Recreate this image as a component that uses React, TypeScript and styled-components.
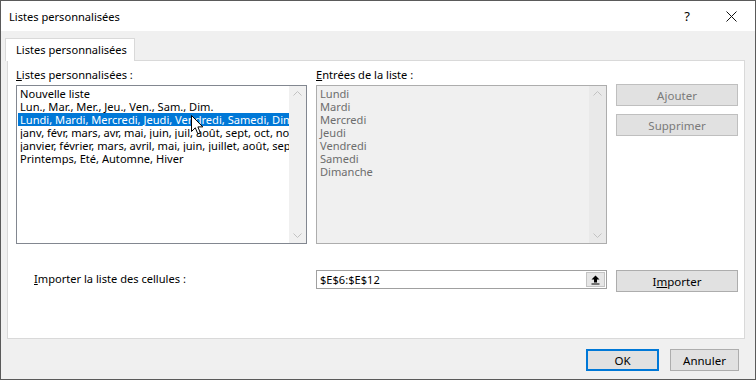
import styled, { createGlobalStyle } from "styled-components";

const GlobalStyle = createGlobalStyle`
  body {
    margin: 0;
    background: #f0f0f0;
    font-family: "Noto Sans", "Open Sans", sans-serif;
  }
`;

const Window = styled.div`
  width: 756px;
  height: 380px;
  box-sizing: border-box;
  border: 1px solid #5a5a5a;
  background: #f0f0f0;
  display: flex;
  flex-direction: column;
  font-size: 11.1px;
  color: #000;
  overflow: hidden;
`;

const TitleBar = styled.div`
  height: 30px;
  flex-shrink: 0;
  background: #fff;
  display: flex;
  align-items: center;
  padding: 0 2px 0 8px;
`;

const Title = styled.div`
  flex: 1;
  font-size: 11.1px;
`;

const CaptionButton = styled.div`
  width: 44px;
  height: 30px;
  display: flex;
  align-items: center;
  justify-content: center;
  font-size: 13px;
`;

const Body = styled.div`
  padding: 7px 4px 0 4px;
  display: flex;
  flex-direction: column;
`;

const TabStrip = styled.div`
  display: flex;
  height: 22px;
  position: relative;
  z-index: 1;
`;

const Tab = styled.div`
  width: 130px;
  height: 23px;
  box-sizing: border-box;
  border: 1px solid #d9d9d9;
  border-bottom: none;
  background: #fff;
  padding: 3px 0 0 10px;
  white-space: nowrap;
`;

const Pane = styled.div`
  margin-left: 2px;
  width: 738px;
  height: 279px;
  box-sizing: border-box;
  border: 1px solid #d9d9d9;
  background: #fff;
  padding: 6px 0 0 8px;
  display: grid;
  grid-template-columns: 291px 291px 122px;
  grid-template-rows: 18px 159px auto;
  column-gap: 9px;
`;

const Label = styled.div<{ $indent?: number }>`
  line-height: 16px;
  padding-left: ${(p) => p.$indent ?? 0}px;
  white-space: nowrap;
`;

const ListBox = styled.div<{ $disabled?: boolean }>`
  position: relative;
  box-sizing: border-box;
  height: 159px;
  border: 1px solid ${(p) => (p.$disabled ? "#adadad" : "#828790")};
  background: ${(p) => (p.$disabled ? "#f0f0f0" : "#fff")};
  display: flex;
  padding: 1px 0 0 1px;
`;

const Rows = styled.div`
  flex: 1;
  overflow: hidden;
`;

const Row = styled.div<{ $selected?: boolean; $disabled?: boolean }>`
  height: 13px;
  line-height: 13px;
  padding-left: 2px;
  white-space: nowrap;
  overflow: hidden;
  background: ${(p) => (p.$selected ? "#0078d7" : "transparent")};
  color: ${(p) => (p.$selected ? "#fff" : p.$disabled ? "#6d6d6d" : "#000")};
`;

const ScrollBar = styled.div<{ $disabled?: boolean }>`
  width: 17px;
  margin-top: -1px;
  background: ${(p) => (p.$disabled ? "#e9e9e9" : "#f0f0f0")};
  display: flex;
  flex-direction: column;
  justify-content: space-between;
  align-items: center;
  padding: 5px 0 5px;
`;

const Cursor = styled.svg`
  position: absolute;
  left: 174px;
  top: 29px;
`;

const ButtonStack = styled.div`
  display: flex;
  flex-direction: column;
  gap: 8px;
  margin-top: -1px;
`;

const Button = styled.div<{ $disabled?: boolean; $default?: boolean; $width?: number }>`
  box-sizing: border-box;
  height: 22px;
  width: ${(p) => (p.$width ? `${p.$width}px` : "auto")};
  background: #e1e1e1;
  border: 1px solid ${(p) => (p.$default ? "#0078d7" : p.$disabled ? "#bfbfbf" : "#adadad")};
  box-shadow: ${(p) => (p.$default ? "inset 0 0 0 1px #0078d7" : "none")};
  color: ${(p) => (p.$disabled ? "#7a7a7a" : "#000")};
  display: flex;
  align-items: center;
  justify-content: center;
  font-size: 11.5px;
`;

const ImportRow = styled.div`
  grid-column: 1 / -1;
  display: grid;
  grid-template-columns: 291px 291px 122px;
  column-gap: 9px;
  margin-top: 26px;
  align-items: start;
`;

const ImportLabel = styled(Label)`
  padding-top: 1px;
`;

const RefInput = styled.div`
  box-sizing: border-box;
  height: 19px;
  border: 1px solid #a0a0a0;
  display: flex;
  align-items: center;
  padding: 0 1px 0 3px;
`;

const RefText = styled.div`
  flex: 1;
`;

const Picker = styled.div`
  width: 19px;
  height: 15px;
  box-sizing: border-box;
  background: #e6e6e6;
  border: 1px solid #c4c4c4;
  display: flex;
  align-items: center;
  justify-content: center;
`;

const Footer = styled.div`
  display: flex;
  justify-content: flex-end;
  gap: 11px;
  padding: 10px 12px 0 0;
`;

const Chevron = ({ down }: { down?: boolean }) => (
  <svg width="9" height="5" viewBox="0 0 9 5">
    <path
      d={down ? "M0.5 0.5 L4.5 4.5 L8.5 0.5" : "M0.5 4.5 L4.5 0.5 L8.5 4.5"}
      fill="none"
      stroke="#c2c2c2"
      strokeWidth="1"
    />
  </svg>
);

const lists = [
  "Nouvelle liste",
  "Lun., Mar., Mer., Jeu., Ven., Sam., Dim.",
  "Lundi, Mardi, Mercredi, Jeudi, Vendredi, Samedi, Dimanche",
  "janv, févr, mars, avr, mai, juin, juil, août, sept, oct, nov, déc",
  "janvier, février, mars, avril, mai, juin, juillet, août, septembre, octobre, novembre, décembre",
  "Printemps, Eté, Automne, Hiver",
];

const entries = ["Lundi", "Mardi", "Mercredi", "Jeudi", "Vendredi", "Samedi", "Dimanche"];

export default function App() {
  return (
    <>
      <GlobalStyle />
      <Window>
        <TitleBar>
          <Title>Listes personnalisées</Title>
          <CaptionButton>?</CaptionButton>
          <CaptionButton>
            <svg width="11" height="11" viewBox="0 0 11 11">
              <path d="M0.5 0.5 L10.5 10.5 M10.5 0.5 L0.5 10.5" stroke="#111" strokeWidth="1" />
            </svg>
          </CaptionButton>
        </TitleBar>
        <Body>
          <TabStrip>
            <Tab>Listes personnalisées</Tab>
          </TabStrip>
          <Pane>
            <Label>
              <u>L</u>istes personnalisées :
            </Label>
            <Label>
              <u>E</u>ntrées de la liste :
            </Label>
            <div />
            <ListBox>
              <Rows>
                {lists.map((l, i) => (
                  <Row key={l} $selected={i === 2}>
                    {l}
                  </Row>
                ))}
              </Rows>
              <ScrollBar>
                <Chevron />
                <Chevron down />
              </ScrollBar>
              <Cursor width="13" height="21" viewBox="0 0 13 21">
                <path
                  d="M0.5 0.5 L0.5 16.5 L4.3 12.8 L6.8 18.8 L9.3 17.8 L6.9 11.9 L11.8 11.9 Z"
                  fill="#fff"
                  stroke="#000"
                  strokeWidth="1"
                />
              </Cursor>
            </ListBox>
            <ListBox $disabled>
              <Rows>
                {entries.map((e) => (
                  <Row key={e} $disabled>
                    {e}
                  </Row>
                ))}
              </Rows>
              <ScrollBar $disabled>
                <Chevron />
                <Chevron down />
              </ScrollBar>
            </ListBox>
            <ButtonStack>
              <Button $disabled>Ajouter</Button>
              <Button $disabled>Supprimer</Button>
            </ButtonStack>
            <ImportRow>
              <ImportLabel $indent={18}>
                <u>I</u>mporter la liste des cellules :
              </ImportLabel>
              <RefInput>
                <RefText>$E$6:$E$12</RefText>
                <Picker>
                  <svg width="9" height="10" viewBox="0 0 9 10">
                    <path d="M4.5 0.5 L8.5 4.5 L6 4.5 L6 7.5 L3 7.5 L3 4.5 L0.5 4.5 Z" fill="#000" />
                    <rect x="0.5" y="8.5" width="8" height="1" fill="#000" />
                  </svg>
                </Picker>
              </RefInput>
              <Button>
                I<u>m</u>porter
              </Button>
            </ImportRow>
          </Pane>
          <Footer>
            <Button $default $width={73}>
              OK
            </Button>
            <Button $width={69}>Annuler</Button>
          </Footer>
        </Body>
      </Window>
    </>
  );
}
